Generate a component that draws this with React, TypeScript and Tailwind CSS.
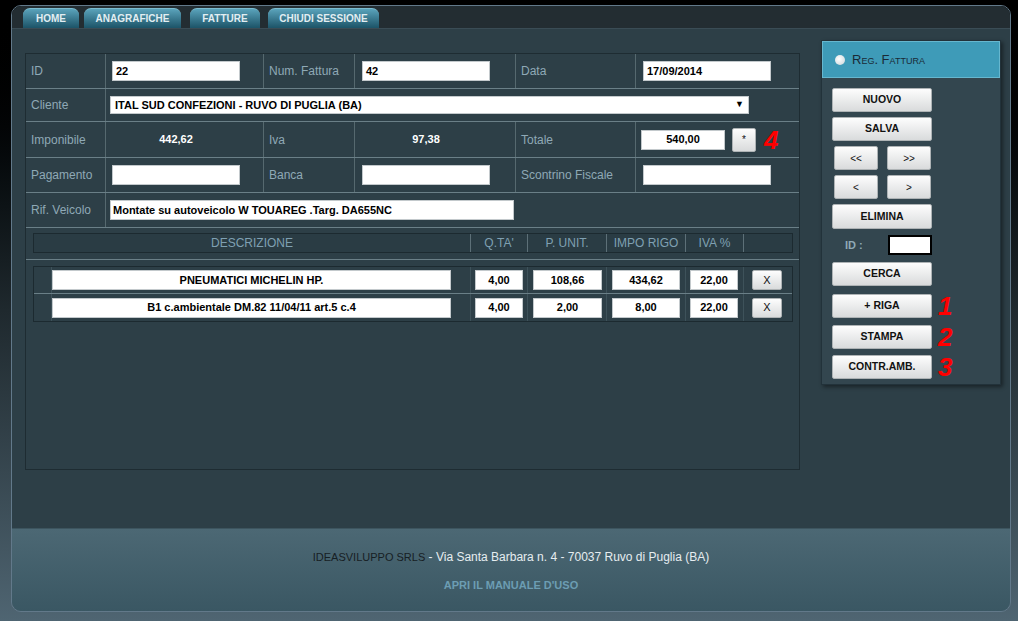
import React from "react";

const lbl = "text-[12px] text-[#8fa9b6] flex items-center pl-[5px] border-r border-[#56696f] h-full";

function Box({ className = "", children }: { className?: string; children?: React.ReactNode }) {
  return (
    <div className={"bg-white border border-[#c3c9cc] text-[11px] font-bold text-black flex items-center px-[3px] whitespace-nowrap overflow-hidden " + className}>
      {children}
    </div>
  );
}

function Btn({ className = "", children }: { className?: string; children?: React.ReactNode }) {
  return (
    <div className={"bg-gradient-to-b from-[#fdfdfd] to-[#d9dbdc] border border-[#aeb3b5] rounded-[2px] text-[10.5px] font-bold text-[#111] flex items-center justify-center " + className}>
      {children}
    </div>
  );
}

function Red({ className = "", children }: { className?: string; children?: React.ReactNode }) {
  return (
    <span className={"text-[26px] leading-none font-bold italic text-[#f00] " + className}>{children}</span>
  );
}

function Tab({ w, label }: { w: string; label: string }) {
  return (
    <div className={"h-[20px] rounded-t-[7px] bg-gradient-to-b from-[#5aa3bb] to-[#1c5468] border-t border-[#7cbcd0] text-[10px] font-bold text-[#e2eef2] flex items-center justify-center " + w}>
      {label}
    </div>
  );
}

export default function App() {
  return (
    <div className="w-[1018px] h-[621px] bg-gradient-to-b from-[#000000] via-[#1f292e] to-[#4f6572] pt-[5px] pb-[9px] pl-[11px] pr-[7px] font-['Liberation_Sans',Arial,sans-serif]">
      <div className="h-full rounded-[10px] border border-[#62798a] overflow-hidden flex flex-col">
        {/* tabs */}
        <div className="h-[23px] bg-[#232d32] flex items-end pl-[11px] border-b border-[#3a4c55]">
          <Tab w="w-[56px]" label="HOME" />
          <div className="w-[5px]" />
          <Tab w="w-[97px]" label="ANAGRAFICHE" />
          <div className="w-[9px]" />
          <Tab w="w-[70px]" label="FATTURE" />
          <div className="w-[8px]" />
          <Tab w="w-[111px]" label="CHIUDI SESSIONE" />
        </div>

        {/* content */}
        <div className="flex-1 bg-[#2d3f47] flex items-start">
          {/* form panel */}
          <div className="ml-[13px] mt-[24px] w-[775px] h-[417px] border border-[#1e2c32] flex flex-col">
            {/* row 1 */}
            <div className="h-[35px] flex items-center border-b border-[#6a7f87]">
              <div className={lbl + " w-[80px]"}>ID</div>
              <div className="w-[158px] h-full border-r border-[#56696f] flex items-center pl-[6px]">
                <Box className="w-[128px] h-[20px]">22</Box>
              </div>
              <div className={lbl + " w-[91px]"}>Num. Fattura</div>
              <div className="w-[161px] h-full border-r border-[#56696f] flex items-center pl-[7px]">
                <Box className="w-[128px] h-[20px]">42</Box>
              </div>
              <div className={lbl + " w-[120px]"}>Data</div>
              <div className="flex-1 h-full flex items-center pl-[7px]">
                <Box className="w-[128px] h-[20px]">17/09/2014</Box>
              </div>
            </div>
            {/* row 2 */}
            <div className="h-[33px] flex items-center border-b border-[#6a7f87]">
              <div className={lbl + " w-[80px]"}>Cliente</div>
              <div className="flex-1 h-full flex items-center pl-[4px]">
                <Box className="w-[639px] h-[18px] justify-between pl-[4px] pr-[4px]">
                  <span>ITAL SUD CONFEZIONI - RUVO DI PUGLIA (BA)</span>
                  <span className="text-[9px]">▼</span>
                </Box>
              </div>
            </div>
            {/* row 3 */}
            <div className="h-[36px] flex items-center border-b border-[#6a7f87]">
              <div className={lbl + " w-[80px]"}>Imponibile</div>
              <div className="w-[158px] h-full border-r border-[#56696f] flex items-center pl-[6px]">
                <div className="w-[128px] text-center text-[11px] font-bold text-white">442,62</div>
              </div>
              <div className={lbl + " w-[91px]"}>Iva</div>
              <div className="w-[161px] h-full border-r border-[#56696f] flex items-center pl-[7px]">
                <div className="w-[128px] text-center text-[11px] font-bold text-white">97,38</div>
              </div>
              <div className={lbl + " w-[120px]"}>Totale</div>
              <div className="flex-1 h-full flex items-center pl-[5px]">
                <Box className="w-[84px] h-[20px] justify-center">540,00</Box>
                <Btn className="ml-[7px] w-[24px] h-[24px] !font-normal text-[10px]">*</Btn>
                <Red className="ml-[8px]">4</Red>
              </div>
            </div>
            {/* row 4 */}
            <div className="h-[35px] flex items-center border-b border-[#6a7f87]">
              <div className={lbl + " w-[80px]"}>Pagamento</div>
              <div className="w-[158px] h-full border-r border-[#56696f] flex items-center pl-[6px]">
                <Box className="w-[128px] h-[20px]" />
              </div>
              <div className={lbl + " w-[91px]"}>Banca</div>
              <div className="w-[161px] h-full border-r border-[#56696f] flex items-center pl-[7px]">
                <Box className="w-[128px] h-[20px]" />
              </div>
              <div className={lbl + " w-[120px]"}>Scontrino Fiscale</div>
              <div className="flex-1 h-full flex items-center pl-[7px]">
                <Box className="w-[128px] h-[20px]" />
              </div>
            </div>
            {/* row 5 */}
            <div className="h-[35px] flex items-center border-b border-[#6a7f87]">
              <div className={lbl + " w-[80px]"}>Rif. Veicolo</div>
              <div className="flex-1 h-full flex items-center pl-[4px]">
                <Box className="w-[404px] h-[20px] pl-[2px]">Montate su autoveicolo W TOUAREG .Targ. DA655NC</Box>
              </div>
            </div>
            {/* header bar */}
            <div className="h-[32px] border-b border-[#6a7f87] pl-[7px] pr-[6px] pt-[5px]">
              <div className="h-[20px] border border-[#1c2a30] bg-[#2a3c44] flex text-[12px] text-[#7fa0b2]">
                <div className="w-[437px] border-r border-[#5d7078] flex items-center justify-center">DESCRIZIONE</div>
                <div className="w-[57px] border-r border-[#5d7078] flex items-center justify-center">Q.TA'</div>
                <div className="w-[79px] border-r border-[#5d7078] flex items-center justify-center">P. UNIT.</div>
                <div className="w-[79px] border-r border-[#5d7078] flex items-center justify-center">IMPO RIGO</div>
                <div className="w-[58px] border-r border-[#5d7078] flex items-center justify-center">IVA %</div>
                <div className="flex-1" />
              </div>
            </div>
            {/* items */}
            <div className="mt-[6px] ml-[7px] w-[760px] border border-[#1c2a30] flex flex-col">
              {[
                ["PNEUMATICI MICHELIN HP.", "4,00", "108,66", "434,62", "22,00"],
                ["B1 c.ambientale DM.82 11/04/11 art.5 c.4", "4,00", "2,00", "8,00", "22,00"],
              ].map((r, i) => (
                <div key={i} className={"h-[27px] flex items-center " + (i === 0 ? "border-b border-[#6a7f87]" : "")}>
                  <div className="w-[18px] h-full border-r border-[#3e525a]" />
                  <div className="w-[419px] h-full border-r border-[#3e525a] flex items-center">
                    <Box className="w-[399px] h-[20px] justify-center">{r[0]}</Box>
                  </div>
                  <div className="w-[57px] h-full border-r border-[#3e525a] flex items-center pl-[4px]">
                    <Box className="w-[48px] h-[20px] justify-center">{r[1]}</Box>
                  </div>
                  <div className="w-[79px] h-full border-r border-[#3e525a] flex items-center pl-[5px]">
                    <Box className="w-[69px] h-[20px] justify-center">{r[2]}</Box>
                  </div>
                  <div className="w-[79px] h-full border-r border-[#3e525a] flex items-center pl-[5px]">
                    <Box className="w-[68px] h-[20px] justify-center">{r[3]}</Box>
                  </div>
                  <div className="w-[58px] h-full border-r border-[#3e525a] flex items-center pl-[4px]">
                    <Box className="w-[48px] h-[20px] justify-center">{r[4]}</Box>
                  </div>
                  <div className="flex-1 h-full flex items-center pl-[8px]">
                    <Btn className="w-[30px] h-[20px] !font-normal text-[11px]">X</Btn>
                  </div>
                </div>
              ))}
            </div>
          </div>

          {/* right panel */}
          <div className="ml-[21px] mt-[11px] w-[180px] h-[345px] border border-[#22323a] bg-[#33464f] shadow-[2px_2px_4px_rgba(0,0,0,0.45)] flex flex-col">
            <div className="h-[37px] bg-[#3e9bb8] border border-[#66b7cf] flex items-center pl-[12px]">
              <div className="w-[10px] h-[10px] rounded-full bg-[radial-gradient(circle_at_40%_40%,#ffffff,#c8d4d8)]" />
              <span className="ml-[7px] text-[13px] text-[#1a2a36] [font-variant:small-caps]">Reg. Fattura</span>
            </div>
            <div className="pl-[10px] pt-[10px] flex flex-col">
              <Btn className="w-[100px] h-[24px]">NUOVO</Btn>
              <Btn className="mt-[5px] w-[100px] h-[24px]">SALVA</Btn>
              <div className="mt-[5px] flex pl-[2px] gap-[9px]">
                <Btn className="w-[44px] h-[24px] !font-normal text-[10px]">&lt;&lt;</Btn>
                <Btn className="w-[44px] h-[24px] !font-normal text-[10px]">&gt;&gt;</Btn>
              </div>
              <div className="mt-[5px] flex pl-[2px] gap-[9px]">
                <Btn className="w-[44px] h-[24px] !font-normal text-[10px]">&lt;</Btn>
                <Btn className="w-[44px] h-[24px] !font-normal text-[10px]">&gt;</Btn>
              </div>
              <Btn className="mt-[5px] w-[100px] h-[25px]">ELIMINA</Btn>
              <div className="mt-[6px] flex items-center h-[20px]">
                <span className="ml-[13px] text-[11px] font-bold text-[#8fa9b6]">ID :</span>
                <div className="ml-[25px] w-[44px] h-[20px] bg-white border-2 border-black" />
              </div>
              <Btn className="mt-[7px] w-[100px] h-[24px]">CERCA</Btn>
              <div className="mt-[7px] flex items-center">
                <Btn className="w-[100px] h-[24px]">+ RIGA</Btn>
                <Red className="ml-[6px]">1</Red>
              </div>
              <div className="mt-[5px] flex items-center">
                <Btn className="w-[100px] h-[24px]">STAMPA</Btn>
                <Red className="ml-[6px]">2</Red>
              </div>
              <div className="mt-[4px] flex items-center">
                <Btn className="w-[100px] h-[24px]">CONTR.AMB.</Btn>
                <Red className="ml-[6px]">3</Red>
              </div>
            </div>
          </div>
        </div>

        {/* footer */}
        <div className="h-[83px] bg-gradient-to-b from-[#4c6874] to-[#3a5763] border-t border-[#3d555f] flex flex-col items-center pt-[20px]">
          <div className="h-[14px] leading-[14px] whitespace-nowrap">
            <span className="text-[11px] text-[#172024]">IDEASVILUPPO SRLS</span>
            <span className="text-[12px] text-[#e6edf0]"> - Via Santa Barbara n. 4 - 70037 Ruvo di Puglia (BA)</span>
          </div>
          <div className="mt-[15px] h-[14px] leading-[14px] text-[11px] font-bold text-[#6c9db3]">APRI IL MANUALE D'USO</div>
        </div>
      </div>
    </div>
  );
}
